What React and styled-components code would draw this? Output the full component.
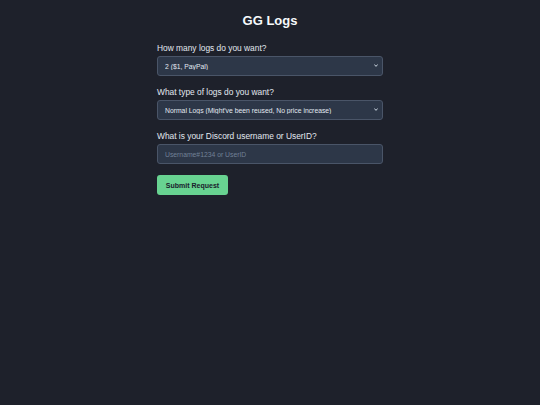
import React from 'react'
import styled, { createGlobalStyle } from 'styled-components'

const GlobalStyle = createGlobalStyle`
  html, body {
    margin: 0;
    padding: 0;
    background: #1e212b;
    font-family: 'Liberation Sans', Arial, sans-serif;
    color: #e2e8f0;
  }
`

const Page = styled.div`
  min-height: 405px;
  display: flex;
  flex-direction: column;
  align-items: center;
  padding-top: 13px;
  box-sizing: border-box;
`

const Title = styled.h1`
  margin: 0 0 14px;
  font-size: 13px;
  line-height: 16px;
  height: 16px;
  font-weight: bold;
  color: #f7fafc;
`

const Form = styled.form`
  width: 226px;
  display: flex;
  flex-direction: column;
`

const Field = styled.div`
  display: flex;
  flex-direction: column;
  margin-bottom: 11px;
`

const Label = styled.label`
  display: block;
  height: 10px;
  font-size: 8.4px;
  line-height: 10px;
  margin-bottom: 3px;
  color: #e2e8f0;
`

const controlStyles = `
  display: block;
  box-sizing: border-box;
  width: 100%;
  height: 20px;
  background: #2d3748;
  border: 1px solid #4a5568;
  border-radius: 3px;
  color: #e2e8f0;
  font-family: 'Liberation Sans', Arial, sans-serif;
  font-size: 6.8px;
  padding: 0 7px;
  outline: none;
  margin: 0;
`

const SelectWrap = styled.div`
  position: relative;
  height: 20px;
`

const Select = styled.select`
  ${controlStyles}
  appearance: none;
  -webkit-appearance: none;
`

const Chevron = styled.svg`
  position: absolute;
  right: 5px;
  top: 8px;
  width: 4px;
  height: 3px;
  pointer-events: none;
`

const Input = styled.input`
  ${controlStyles}
  &::placeholder {
    color: #718096;
  }
`

const Button = styled.button`
  align-self: flex-start;
  margin: 0;
  height: 20px;
  width: 71px;
  padding: 0;
  background: #68d391;
  border: none;
  border-radius: 3px;
  color: #1a202c;
  font-family: 'Liberation Sans', Arial, sans-serif;
  font-size: 7px;
  font-weight: bold;
`

const Arrow = () => (
  <Chevron viewBox='0 0 4 3'>
    <path d='M0.4 0.5 L2 2.4 L3.6 0.5' fill='none' stroke='#cbd5e0' strokeWidth='1' />
  </Chevron>
)

export default function App() {
  return (
    <>
      <GlobalStyle />
      <Page>
        <Title>GG Logs</Title>
        <Form onSubmit={(e) => e.preventDefault()}>
          <Field>
            <Label>How many logs do you want?</Label>
            <SelectWrap>
              <Select defaultValue='2'>
                <option value='1'>1 ($0.50, PayPal)</option>
                <option value='2'>2 ($1, PayPal)</option>
              </Select>
              <Arrow />
            </SelectWrap>
          </Field>
          <Field>
            <Label>What type of logs do you want?</Label>
            <SelectWrap>
              <Select defaultValue='normal'>
                <option value='normal'>Normal Logs (Might've been reused, No price increase)</option>
              </Select>
              <Arrow />
            </SelectWrap>
          </Field>
          <Field>
            <Label>What is your Discord username or UserID?</Label>
            <Input placeholder='Username#1234 or UserID' />
          </Field>
          <Button type='submit'>Submit Request</Button>
        </Form>
      </Page>
    </>
  )
}
